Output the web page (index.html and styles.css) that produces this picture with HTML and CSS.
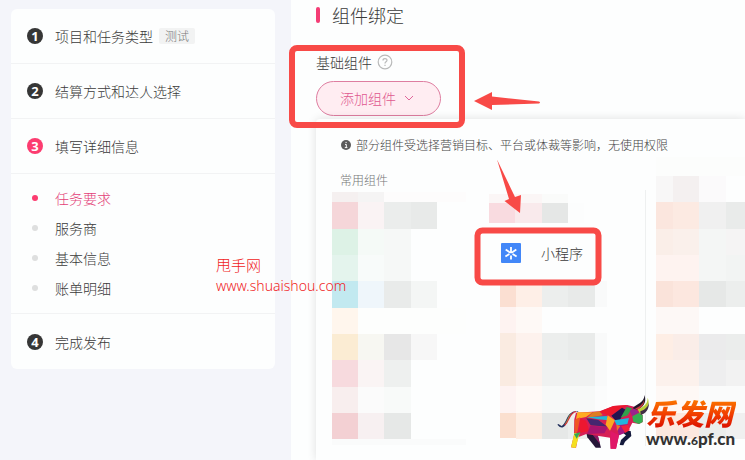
FILE: index.html
```html
<!DOCTYPE html>
<html lang="zh-CN">
<head>
<meta charset="utf-8">
<meta name="viewport" content="width=device-width, initial-scale=1">
<title>组件绑定</title>
<link rel="stylesheet" href="styles.css">
</head>
<body>
<div class="page">
  <nav class="steps">
    <a class="step" href="#type"><span class="num">1</span><span>项目和任务类型</span><span class="tag">测试</span></a>
    <a class="step" href="#settle"><span class="num">2</span><span>结算方式和达人选择</span></a>
    <a class="step" href="#detail"><span class="num active">3</span><span>填写详细信息</span></a>
    <ul class="substeps">
      <li><a class="current" href="#task">任务要求</a></li>
      <li><a href="#provider">服务商</a></li>
      <li><a href="#basic">基本信息</a></li>
      <li><a href="#bill">账单明细</a></li>
    </ul>
    <a class="step" href="#finish"><span class="num">4</span><span>完成发布</span></a>
  </nav>

  <main class="main">
    <h1 class="title">组件绑定</h1>
    <div class="label">基础组件
      <svg class="help" viewBox="0 0 16 16" aria-hidden="true"><circle cx="8" cy="8" r="6.8"/><path d="M6 6.4C6 4 10 4 10 6.3 10 7.8 8 7.8 8 9.4M8 10.8v1.2"/></svg>
    </div>
    <button class="add" type="button">添加组件
      <svg class="chevron" viewBox="0 0 10 10" aria-hidden="true"><path d="M1 3l4 4 4-4"/></svg>
    </button>

    <section class="panel">
      <p class="notice">
        <svg class="info" viewBox="0 0 10 10" aria-hidden="true"><circle cx="5" cy="5" r="5"/><path d="M4 4.4h1.3v3M3.8 7.6h2.6M4.5 2.4h1.2"/></svg>
        部分组件受选择营销目标、平台或体裁等影响，无使用权限
      </p>
      <div class="groups">
        <div class="common">
          <h2 class="group-title">常用组件</h2>
          <div class="cols">
            <svg class="mosaic" width="134" height="254" viewBox="0 0 134 254" aria-hidden="true">
              <path fill="#f5f0f0" d="M0 0h26v10H0z"/><path fill="#f5f4f4" d="M26 0h26v10H26z"/><path fill="#fdfcfc" d="M52 0h82v10H52z"/>
              <path fill="#f5d6d9" d="M0 10h26v27H0z"/><path fill="#faf3f4" d="M26 10h26v27H26z"/><path fill="#ebedec" d="M52 10h27v27H52z"/><path fill="#e8eae9" d="M79 10h26v27H79z"/>
              <path fill="#ddf2e6" d="M0 37h26v26H0z"/><path fill="#f5faf7" d="M26 37h26v26H26z"/><path fill="#f6f8f7" d="M52 37h27v52H52z"/>
              <path fill="#e4f4ed" d="M0 63h26v26H0z"/><path fill="#f8fbfa" d="M26 63h26v26H26z"/>
              <path fill="#c2e9f0" d="M0 89h26v27H0z"/><path fill="#eff6fb" d="M26 89h26v27H26z"/><path fill="#e9ebea" d="M52 89h27v27H52z"/><path fill="#f4f6f5" d="M79 89h26v27H79z"/>
              <path fill="#fff6ed" d="M0 116h26v26H0z"/><path fill="#fdfefd" d="M26 116h108v26H26z"/>
              <path fill="#fbecd3" d="M0 142h26v26H0z"/><path fill="#f7f7f2" d="M26 142h26v26H26z"/><path fill="#e7e7e7" d="M52 142h27v26H52z"/><path fill="#f7f7f7" d="M79 142h26v26H79z"/>
              <path fill="#f7dade" d="M0 168h26v27H0z"/><path fill="#faf4f4" d="M26 168h26v27H26z"/><path fill="#eef0ef" d="M52 168h27v27H52z"/>
              <path fill="#f8eeee" d="M0 195h26v26H0z"/><path fill="#fbfbfb" d="M26 195h26v26H26z"/><path fill="#f8faf9" d="M52 195h27v26H52z"/>
              <path fill="#f3d0d3" d="M0 221h26v26H0z"/><path fill="#f7f0f1" d="M26 221h26v26H26z"/><path fill="#e6e8e7" d="M52 221h27v26H52z"/>
              <path fill="#fafbfb" d="M0 247h134v6H0z"/>
            </svg>
            <div class="second">
              <svg class="mosaic" width="95" height="31" viewBox="0 0 95 31" aria-hidden="true">
                <path fill="#fbf6f6" d="M0 2h53v9H0z"/><path fill="#fafbfa" d="M53 2h26v9H53z"/>
                <path fill="#f9dbe0" d="M0 11h26v20H0z"/><path fill="#f9eaec" d="M26 11h27v20H26z"/><path fill="#e5e7e6" d="M53 11h26v20H53z"/><path fill="#fcfdfd" d="M79 11h16v20H79z"/>
              </svg>
              <button class="mini" type="button">
                <svg class="mini-icon" viewBox="0 0 20 20" aria-hidden="true"><rect width="20" height="20" rx="1" fill="#4287f8"/><path d="M10 4v5.200M10 12.500v4M4.700 6.500l3.600 2.500M15.300 6.500l-3.600 2.500M4.400 13.600l4-2.700M15.600 13.600l-4-2.700M8 9.300h4" fill="none" stroke="#fff" stroke-width="1.800"/></svg>
                小程序
              </button>
              <svg class="mosaic lower" width="107" height="158" viewBox="0 0 107 158" aria-hidden="true">
                <path fill="#fbdfd2" d="M0 0h16v26H0z"/><path fill="#feefe7" d="M16 0h26v26H16z"/><path fill="#eceeed" d="M42 0h26v26H42z"/><path fill="#e8eae9" d="M68 0h27v26H68z"/><path fill="#f9fafa" d="M95 0h12v26H95z"/>
                <path fill="#fef3f1" d="M0 26h16v26H0z"/><path fill="#fef9f6" d="M16 26h26v26H16z"/>
                <path fill="#faebe1" d="M0 52h16v53H0z"/><path fill="#fdf2ed" d="M16 52h26v53H16z"/><path fill="#eceeed" d="M42 52h26v27H42z"/><path fill="#e9ebea" d="M68 52h27v27H68z"/><path fill="#f9fafa" d="M95 52h12v53H95z"/>
                <path fill="#f0f2f1" d="M42 79h53v26H42z"/>
                <path fill="#fef3f2" d="M0 105h16v27H0z"/><path fill="#fff9f6" d="M16 105h26v27H16z"/><path fill="#f7f9f8" d="M42 105h53v27H42z"/><path fill="#fbfcfc" d="M95 105h12v27H95z"/>
                <path fill="#fbdfcf" d="M0 132h16v25H0z"/><path fill="#feeee4" d="M16 132h26v26H16z"/><path fill="#e6e8e7" d="M42 132h26v26H42z"/><path fill="#eceeed" d="M68 132h27v26H68z"/><path fill="#f8f9f9" d="M95 132h12v26H95z"/>
              </svg>
            </div>
          </div>
        </div>
        <div class="other">
          <svg class="mosaic" width="89" height="282" viewBox="0 0 89 282" aria-hidden="true">
            <path fill="#fcfdfc" d="M0 0h89v19H0z"/><path fill="#f8f7f7" d="M0 19h17v26H0z"/><path fill="#f4f0f0" d="M17 19h26v26H17z"/><path fill="#fbfafb" d="M43 19h27v26H43z"/>
            <path fill="#fbe6de" d="M0 45h17v27H0z"/><path fill="#fceae2" d="M17 45h26v27H17z"/><path fill="#f0f0f0" d="M43 45h27v27H43z"/><path fill="#e9ebea" d="M70 45h19v27H70z"/>
            <path fill="#faeee8" d="M0 72h17v26H0z"/><path fill="#faf0eb" d="M17 72h26v26H17z"/><path fill="#f4f6f5" d="M43 72h27v52H43z"/><path fill="#f5f4f4" d="M70 72h19v26H70z"/>
            <path fill="#fef3f0" d="M0 98h43v26H0z"/><path fill="#f2f4f3" d="M70 98h19v26H70z"/>
            <path fill="#fae3da" d="M0 124h17v26H0z"/><path fill="#fce7df" d="M17 124h26v26H17z"/><path fill="#e6e8e7" d="M43 124h27v26H43z"/><path fill="#eceeed" d="M70 124h19v26H70z"/>
            <path fill="#fdf8f6" d="M0 150h43v27H0z"/>
            <path fill="#feeee5" d="M0 177h17v26H0z"/><path fill="#faede8" d="M17 177h26v26H17z"/><path fill="#ebebec" d="M43 177h27v26H43z"/><path fill="#ebedec" d="M70 177h19v26H70z"/>
            <path fill="#fcf1ec" d="M0 203h43v26H0z"/><path fill="#eeeeef" d="M43 203h27v26H43z"/><path fill="#f2f2f2" d="M70 203h19v26H70z"/>
            <path fill="#fef8f5" d="M0 229h43v27H0z"/><path fill="#fafbfb" d="M43 229h46v27H43z"/>
            <path fill="#fce8df" d="M0 256h43v26H0z"/><path fill="#ebedec" d="M43 256h27v26H43z"/><path fill="#f0f0f0" d="M70 256h19v26H70z"/>
          </svg>
        </div>
      </div>
    </section>
  </main>

  <svg class="arrows" width="745" height="460" viewBox="0 0 745 460" aria-hidden="true">
    <path d="M474 101L492 92V96.500L539 101.500Q541 102.500 539 103.500L492 105V110Z"/>
    <path d="M497 159.500L515 197L521 195L520 213L504.500 201L509 199Z"/>
    <rect x="292" y="48" width="170" height="77" rx="5"/>
    <rect x="477.500" y="230.500" width="121" height="52" rx="5"/>
  </svg>

  <div class="watermark">甩手网<br><span>www.shuaishou.com</span></div>

  <div class="logo">
    <svg class="bull" viewBox="0 0 300 210" aria-hidden="true">
      <path d="M85 80Q72 78 65 86C54 98 53 118 39 127Q31 130 22 119L25 117L35 123C46 117 49 99 58 88Q68 77 84 78Z" fill="#23305c"/>
      <path d="M78 80C58 82 58 108 44 121" fill="none" stroke="#d92a36" stroke-width="4"/>
      <path d="M62 86C54 96 53 108 46 116" fill="none" stroke="#b2ad48" stroke-width="2"/>
      <path d="M108 140L142 147L153 188H137L112 157Z" fill="#251638"/>
      <path d="M126 147L143 149L150 177Z" fill="#8b1963"/>
      <path d="M211 137L242 138L244 153L225 170L220 181L209 180L213 165L228 151Z" fill="#141a3c"/>
      <path d="M78 83L149 79L190 63L232 60L264 68L278 91V111L267 117L247 113L237 133L207 151L198 191H182L180 158L109 147L84 157L78 189L63 187L72 151L73 103Z" fill="#d71e55"/>
      <path d="M82 82L128 82L108 96L78 102Z" fill="#ffad22"/><path d="M74 104L91 97L82 141L74 147Z" fill="#ef5524"/>
      <path d="M91 101L108 107L118 138L85 145Z" fill="#ed1730"/><path d="M128 82L149 79L158 91L111 99Z" fill="#de7d20"/>
      <path d="M110 97L171 93L176 106L144 103Z" fill="#22b8d5"/><path d="M109 100L145 105L172 125L122 121Z" fill="#45266f"/>
      <path d="M121 122L174 126L163 145L111 147Z" fill="#a7146f"/><path d="M148 80L190 63L232 60L205 77L180 93Z" fill="#ed182c"/>
      <path d="M184 92L216 68L230 76L203 113Z" fill="#22154f"/><path d="M230 66L246 70L233 91L212 98Z" fill="#32a04b"/>
      <path d="M239 78L254 68L267 83L247 94Z" fill="#9b248c"/><path d="M247 94L268 83L278 91V111L267 117L250 110Z" fill="#36af51"/>
      <path d="M173 91L195 106L180 137L167 119Z" fill="#fba821"/><path d="M193 106L237 99L232 118L200 121Z" fill="#21b6dd"/>
      <path d="M199 122L234 118L223 145L207 151Z" fill="#a51782"/><path d="M181 137L207 151L198 191H182Z" fill="#e01868"/>
      <path d="M199 119L211 123L201 138Z" fill="#eb7627"/><path d="M73 144L89 144L77 189L63 187Z" fill="#f4df20"/>
      <path d="M72 147L92 141L80 161Z" fill="#35a657"/><path d="M213 123L235 119L239 136L225 144Z" fill="#f3223c"/>
      <path d="M248 70C258 57 284 54 283 30C292 52 277 70 262 74Z" fill="#20182a"/>
      <path d="M255 71C275 62 280 54 282 45C284 57 273 69 264 74Z" fill="#cc3a40"/>
      <path d="M263 73C286 63 293 54 293 38C302 59 287 82 271 88Z" fill="#b9cf39"/>
      <path d="M271 79C288 74 296 61 297 51C298 72 287 87 272 89Z" fill="#402d45"/>
    </svg>
    <div class="logo-text">
      <strong>乐发网</strong>
      <span>www.<small>6</small>pf.cn</span>
    </div>
  </div>
</div>
</body>
</html>
```
FILE: styles.css
```css
* { box-sizing: border-box; }
body {
  margin: 0;
  background: #f4f5fa;
  color: #3a3a3a;
  font: 300 14px/20px "Noto Sans CJK SC", sans-serif;
}
a { color: inherit; text-decoration: none; }
h1, h2, p, ul { margin: 0; padding: 0; font-weight: 300; }
button { font: inherit; color: inherit; }

.page {
  position: relative;
  display: grid;
  grid-template-columns: 264px minmax(0, 1fr);
  column-gap: 16px;
  align-items: start;
  min-height: 100vh;
  padding-left: 11px;
  overflow: hidden;
}

.steps {
  margin-top: 9px;
  background: #fdfefe;
  border-radius: 6px;
}
.step {
  display: flex;
  align-items: center;
  height: 55px;
  padding-left: 16px;
  border-bottom: 1px solid #f2f3f4;
}
.step:last-child { border-bottom: 0; }
.num {
  width: 16px;
  height: 16px;
  margin-right: 12px;
  border-radius: 50%;
  background: #363636;
  color: #fff;
  font: 700 13px/16px "Open Sans", sans-serif;
  text-align: center;
}
.num.active { background: #fc3c70; }
.tag {
  margin-left: 6px;
  padding: 0 6px;
  border-radius: 2px;
  background: #f2f3f3;
  color: #777;
  font-size: 12px;
  line-height: 16px;
}
.substeps {
  padding: 9px 0 10px;
  list-style: none;
  border-bottom: 1px solid #f2f3f4;
}
.substeps a {
  display: flex;
  align-items: center;
  height: 30px;
  padding-left: 21px;
}
.substeps a::before {
  content: "";
  width: 6px;
  height: 6px;
  margin-right: 17px;
  border-radius: 50%;
  background: #dedfdf;
}
.substeps .current { color: #e33f78; }
.substeps .current::before { background: #fc3c70; }

.main {
  display: flex;
  flex-direction: column;
  align-items: flex-start;
  min-height: 100vh;
  padding-left: 25px;
  background: #fdfefe;
}
.title {
  display: flex;
  align-items: center;
  height: 30px;
  font-size: 18px;
}
.title::before {
  content: "";
  width: 4px;
  height: 16px;
  margin-right: 12px;
  border-radius: 2px;
  background: #f43d75;
}
.label {
  display: flex;
  align-items: center;
  gap: 5px;
  margin-top: 22px;
}
.help { width: 16px; height: 16px; fill: none; stroke: #b9baba; stroke-width: 1.2; }
.add {
  display: flex;
  align-items: center;
  gap: 8px;
  height: 35px;
  margin-top: 9px;
  padding: 0 26px 2px 23px;
  border: 1px solid #de7da0;
  border-radius: 18px;
  background: #ffedf2;
  color: #e0588f;
}
.chevron { width: 10px; height: 10px; fill: none; stroke: #e0669a; }

.panel {
  align-self: stretch;
  flex: 1;
  margin-top: 3px;
  padding-top: 16px;
  background: #fdfefe;
  border-radius: 4px 0 0 0;
  box-shadow: 0 0 10px #0000001f;
}
.notice {
  display: flex;
  align-items: center;
  gap: 5px;
  padding-left: 25px;
  color: #444;
  font-size: 12px;
  white-space: nowrap;
}
.info { width: 10px; height: 10px; fill: #5c5c5c; }
.info path { fill: none; stroke: #fff; }
.groups { display: flex; }
.common { width: 329px; padding: 15px 0 0 16px; }
.group-title {
  padding-left: 8px;
  color: #777;
  font-size: 12px;
}
.cols { display: flex; gap: 23px; margin-top: 2px; }
.mosaic { display: block; flex: none; shape-rendering: crispEdges; }
.mini {
  display: flex;
  align-items: center;
  gap: 20px;
  height: 58px;
  padding: 2px 0 0 12px;
  border: 0;
  background: none;
}
.mini-icon { width: 20px; height: 20px; }
.lower { margin-left: 11px; }
.other { flex: 1; display: flex; padding-top: 2px; overflow: hidden; }
.other::before {
  content: "";
  width: 1px;
  margin: 33px 10px 0 0;
  background: #eef0f0;
}

.arrows {
  position: absolute;
  top: 0;
  left: 0;
  fill: #f84a47;
  pointer-events: none;
}
.arrows rect { fill: none; stroke: #f84a47; stroke-width: 6; }

.watermark {
  position: absolute;
  top: 255px;
  left: 216px;
  color: #f01c24;
  font-size: 15px;
}
.watermark span { font-family: "Noto Sans", sans-serif; font-size: 14px; }
.logo {
  position: absolute;
  right: 9px;
  bottom: 5px;
  display: flex;
}
.bull { width: 100px; height: 70px; margin-right: -4px; }
.logo-text {
  display: flex;
  flex-direction: column;
  width: 90px;
  margin-top: 10px;
  color: #333;
  font: 900 17px/20px Lato, sans-serif;
  white-space: nowrap;
}
.logo-text strong {
  font: italic 900 29px/34px "Noto Sans CJK SC", sans-serif;
  color: transparent;
  background: linear-gradient(#ff8a00, #f03a00 60%, #d80c00);
  background-clip: text;
}
.logo-text small { font-size: 12px; }
```
